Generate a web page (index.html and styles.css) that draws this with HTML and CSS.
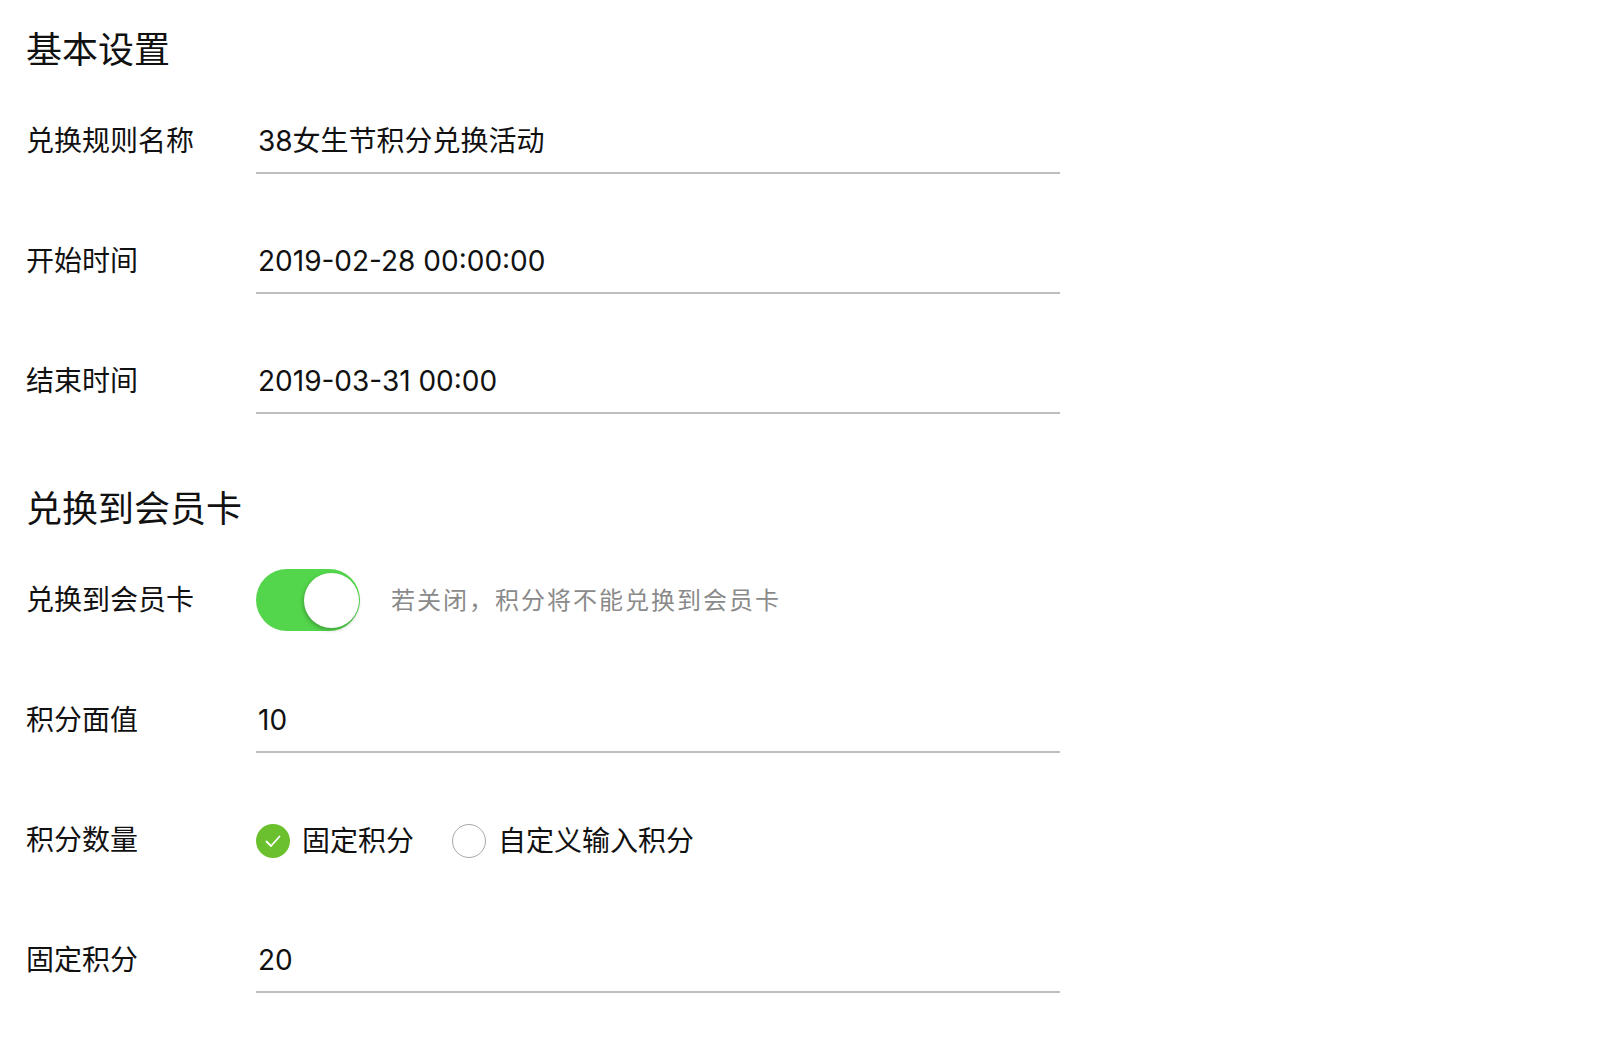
FILE: index.html
```html
<!DOCTYPE html>
<html lang="zh-CN">
<head>
<meta charset="utf-8">
<title>兑换设置</title>
<link rel="stylesheet" href="styles.css">
</head>
<body>
<main class="page">
  <section class="section">
    <h2 class="section-title">基本设置</h2>
    <div class="rows">
      <div class="row">
        <div class="label">兑换规则名称</div>
        <div class="field field-line">38女生节积分兑换活动</div>
      </div>
      <div class="row">
        <div class="label">开始时间</div>
        <div class="field field-line">2019-02-28 00:00:00</div>
      </div>
      <div class="row">
        <div class="label">结束时间</div>
        <div class="field field-line">2019-03-31 00:00</div>
      </div>
    </div>
  </section>

  <section class="section">
    <h2 class="section-title">兑换到会员卡</h2>
    <div class="rows">
      <div class="row">
        <div class="label">兑换到会员卡</div>
        <div class="field">
          <span class="switch"><span class="knob"></span></span>
          <span class="hint">若关闭，积分将不能兑换到会员卡</span>
        </div>
      </div>
      <div class="row">
        <div class="label">积分面值</div>
        <div class="field field-line">10</div>
      </div>
      <div class="row">
        <div class="label">积分数量</div>
        <div class="field">
          <span class="radio-opt">
            <span class="radio radio-on">
              <svg width="34" height="34" viewBox="0 0 34 34"><path d="M10.5 17.5 L15 22 L23.5 12.5" fill="none" stroke="#fff" stroke-width="1.8" stroke-linecap="round" stroke-linejoin="round"/></svg>
            </span>
            <span class="radio-text">固定积分</span>
          </span>
          <span class="radio-opt">
            <span class="radio"></span>
            <span class="radio-text">自定义输入积分</span>
          </span>
        </div>
      </div>
      <div class="row">
        <div class="label">固定积分</div>
        <div class="field field-line">20</div>
      </div>
    </div>
  </section>
</main>
</body>
</html>
```

FILE: styles.css
```css
html, body {
  margin: 0;
  padding: 0;
  background: #ffffff;
}

body {
  font-family: Inter, "Noto Sans CJK SC", "Noto Sans", sans-serif;
  color: #111111;
}

.page {
  padding: 25px 0 0 26px;
  display: flex;
  flex-direction: column;
  gap: 70px;
}

.section {
  display: flex;
  flex-direction: column;
  gap: 33px;
}

.section-title {
  margin: 0;
  font-size: 36px;
  font-weight: 400;
  line-height: 50px;
  height: 50px;
  color: #111111;
}

.rows {
  display: flex;
  flex-direction: column;
  gap: 54px;
}

.row {
  display: flex;
  align-items: flex-start;
  height: 66px;
}

.label {
  width: 230px;
  flex: none;
  font-size: 28px;
  line-height: 66px;
  height: 64px;
  color: #111111;
}

.field {
  width: 802px;
  height: 64px;
  border-bottom: 2px solid transparent;
  font-size: 28px;
  line-height: 66px;
  padding-left: 2px;
  box-sizing: content-box;
  display: flex;
  align-items: center;
  color: #111111;
}

.field-line {
  border-bottom-color: #bebebe;
  display: block;
}

.switch {
  position: relative;
  width: 104px;
  height: 62px;
  border-radius: 31px;
  background: #54d64c;
  flex: none;
  margin-left: -2px;
  margin-top: 2px;
}

.knob {
  position: absolute;
  top: 4px;
  right: 1px;
  width: 55px;
  height: 55px;
  border-radius: 50%;
  background: #ffffff;
  box-shadow: -1px 2px 4px rgba(0, 0, 0, 0.25);
}

.hint {
  margin-left: 31px;
  margin-top: 4px;
  font-size: 24px;
  line-height: 40px;
  letter-spacing: 2px;
  color: #8a8a8a;
}

.radio-opt {
  display: flex;
  align-items: center;
  gap: 12px;
  margin-right: 38px;
  margin-top: 4px;
  line-height: 40px;
}

.radio-opt:first-child {
  margin-left: -2px;
}

.radio {
  width: 34px;
  height: 34px;
  border-radius: 50%;
  box-sizing: border-box;
  border: 1.5px solid #a9a9a9;
  flex: none;
  display: flex;
}

.radio-on {
  border: none;
  background: #6ac12d;
}

.radio-text {
  font-size: 28px;
}
```
